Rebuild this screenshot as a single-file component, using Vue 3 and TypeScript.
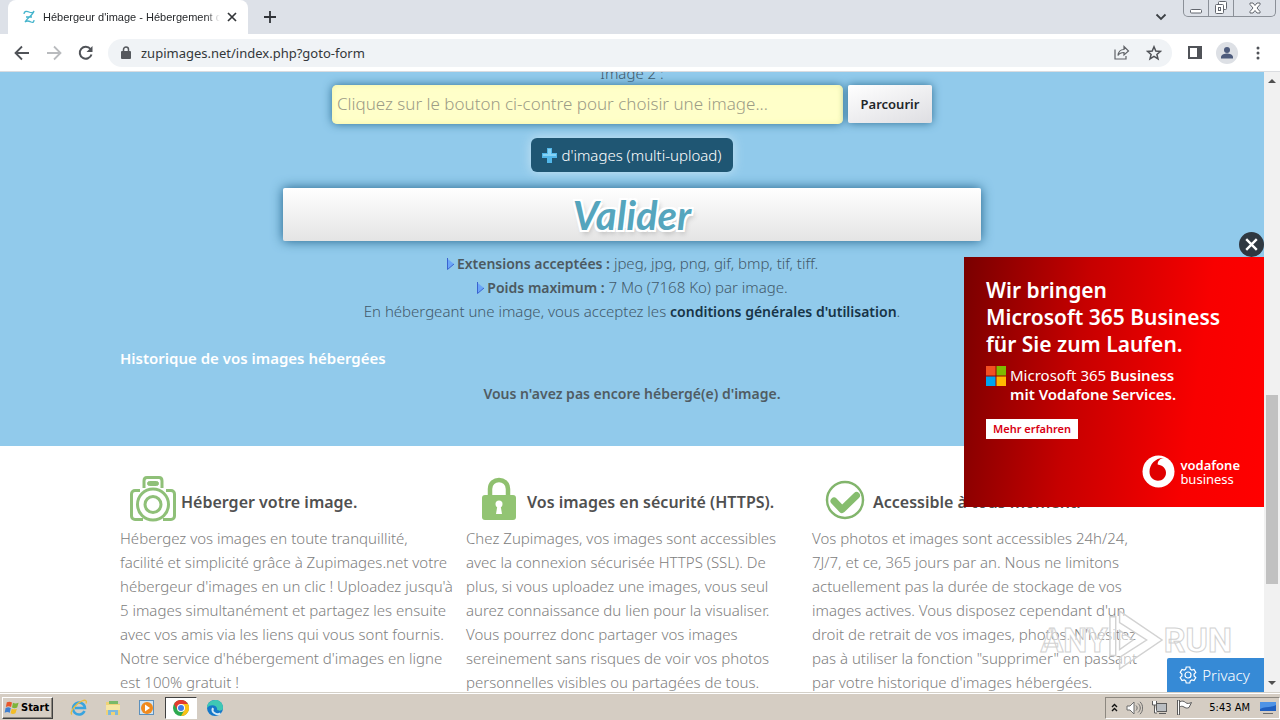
<script setup lang="ts">
import { ref } from 'vue'

interface Feature {
  icon: 'camera' | 'lock' | 'check'
  title: string
  text: string
}

const address = ref('zupimages.net/index.php?goto-form')
const fileName = ref('')
const adOpen = ref(true)

const features: Feature[] = [
  {
    icon: 'camera',
    title: 'Héberger votre image.',
    text: `Hébergez vos images en toute tranquillité,
facilité et simplicité grâce à Zupimages.net votre
hébergeur d'images en un clic ! Uploadez jusqu'à
5 images simultanément et partagez les ensuite
avec vos amis via les liens qui vous sont fournis.
Notre service d'hébergement d'images en ligne
est 100% gratuit !`,
  },
  {
    icon: 'lock',
    title: 'Vos images en sécurité (HTTPS).',
    text: `Chez Zupimages, vos images sont accessibles
avec la connexion sécurisée HTTPS (SSL). De
plus, si vous uploadez une images, vous seul
aurez connaissance du lien pour la visualiser.
Vous pourrez donc partager vos images
sereinement sans risques de voir vos photos
personnelles visibles ou partagées de tous.`,
  },
  {
    icon: 'check',
    title: 'Accessible à tous moment.',
    text: `Vos photos et images sont accessibles 24h/24,
7J/7, et ce, 365 jours par an. Nous ne limitons
actuellement pas la durée de stockage de vos
images actives. Vous disposez cependant d'un
droit de retrait de vos images, photos. N'hésitez
pas à utiliser la fonction "supprimer" en passant
par votre historique d'images hébergées.`,
  },
]
</script>

<template>
  <div class="screen">
    <header class="tabs">
      <div class="tab">
        <svg class="favicon" width="16" height="16" viewBox="0 0 16 16" fill="none" stroke="#45b4cc" stroke-width="1.300">
          <path d="M3 5C3 2 6 2 8 3s4 1 5-1C12 6 6 9 4 13c2-2 4-1 6 0s3 0 3-2M5 8h6" />
        </svg>
        <span class="tab-title">Hébergeur d'image - Hébergement d</span>
        <button class="plain" aria-label="Fermer l'onglet">
          <svg width="12" height="12" viewBox="0 0 12 12" stroke="#333639" stroke-width="1.700"><path d="M2 2l8 8M10 2l-8 8" /></svg>
        </button>
      </div>
      <button class="plain new-tab" aria-label="Nouvel onglet">
        <svg width="14" height="14" viewBox="0 0 14 14" stroke="#303338" stroke-width="1.800"><path d="M7 1v12M1 7h12" /></svg>
      </button>
      <span class="grow"></span>
      <button class="plain chevron" aria-label="Rechercher dans les onglets">
        <svg width="12" height="8" viewBox="0 0 12 8" fill="none" stroke="#3c4045" stroke-width="1.800"><path d="M1.500 1.500L6 6l4.500-4.500" /></svg>
      </button>
      <div class="window-buttons">
        <button class="plain" aria-label="Réduire">
          <svg width="12" height="14" viewBox="0 0 12 14" fill="#fff" stroke="#62666e"><rect x=".5" y="8.500" width="11" height="3.500" rx="1" /></svg>
        </button>
        <button class="plain" aria-label="Restaurer">
          <svg width="14" height="14" viewBox="0 0 14 14" fill="#fff" stroke="#62666e"><rect x="4.500" y=".5" width="8" height="8" rx="1" /><rect x="1.500" y="3.500" width="8" height="9" rx="1" /><rect x="4.500" y="6.500" width="2" height="3" /></svg>
        </button>
        <button class="plain wide" aria-label="Fermer">
          <svg width="12" height="12" viewBox="0 0 12 12" fill="#fff" stroke="#62666e"><path d="M1 1h3l2 2.500L8 1h3v1.500L8 6l3 3.500V11H8L6 8.500 4 11H1V9.500L4 6 1 2.500z" /></svg>
        </button>
      </div>
    </header>

    <nav class="toolbar">
      <button class="plain" aria-label="Retour">
        <svg width="16" height="16" viewBox="0 0 16 16" fill="none" stroke="#505358" stroke-width="1.800"><path d="M15 8H2M8 1.500L1.500 8 8 14.500" /></svg>
      </button>
      <button class="plain" aria-label="Avancer">
        <svg width="16" height="16" viewBox="0 0 16 16" fill="none" stroke="#b9bbbe" stroke-width="1.800"><path d="M1 8h13M8 1.500L14.500 8 8 14.500" /></svg>
      </button>
      <button class="plain" aria-label="Actualiser">
        <svg width="16" height="16" viewBox="0 0 16 16" fill="none" stroke="#505358" stroke-width="2"><path d="M13.500 9.500A6 6 0 1 1 12.500 4" /><path d="M14.500 1v6h-6z" fill="#505358" stroke="none" /></svg>
      </button>
      <div class="omnibox">
        <svg width="10" height="13" viewBox="0 0 10 13"><rect x="0" y="5" width="10" height="8" rx="1" fill="#55585d" /><path d="M2.500 5V3.500a2.500 2.500 0 0 1 5 0V5" fill="none" stroke="#55585d" stroke-width="1.500" /></svg>
        <div class="address">
          <input v-model="address" type="text" aria-label="Adresse" class="url" />
        </div>
        <button class="plain" aria-label="Partager">
          <svg width="16" height="15" viewBox="0 0 16 15" fill="none" stroke="#606368" stroke-width="1.200"><path d="M1 4.500V14h11v-3" /><path d="M4 10.500C4.500 6 7 4.500 10 4.500V1.500l4.500 4.500L10 10V7.500c-3 0-4.500.5-6 3z" /></svg>
        </button>
        <button class="plain" aria-label="Ajouter aux favoris">
          <svg width="16" height="16" viewBox="0 0 16 16" fill="none" stroke="#505358" stroke-width="1.500"><path d="M8 1.800l1.800 4.300 4.600.3-3.500 3 1.100 4.500L8 11.400 4 13.900l1.100-4.500-3.500-3 4.600-.3z" /></svg>
        </button>
      </div>
      <div class="tools">
        <button class="plain" aria-label="Panneau latéral">
          <svg width="14" height="13" viewBox="0 0 14 13"><path d="M0 0h14v13H0zM2 2v9h7V2z" fill="#505358" fill-rule="evenodd" /></svg>
        </button>
        <button class="plain" aria-label="Profil">
          <svg width="22" height="22" viewBox="0 0 22 22"><circle cx="11" cy="11" r="11" fill="#dde0e5" /><circle cx="11" cy="8" r="3" fill="#4d5b7c" /><path d="M5 16.500v-1.500c0-2.500 4-3.500 6-3.500s6 1 6 3.500v1.500z" fill="#4d5b7c" /></svg>
        </button>
        <button class="plain menu" aria-label="Menu">
          <svg width="4" height="14" viewBox="0 0 4 14" fill="#505358"><circle cx="2" cy="2" r="1.500" /><circle cx="2" cy="7" r="1.500" /><circle cx="2" cy="12" r="1.500" /></svg>
        </button>
      </div>
    </nav>

    <div class="viewport">
      <main class="page">
        <section class="upload">
          <form class="form" @submit.prevent>
            <label for="image2">Image 2 :</label>
            <div class="file-row">
              <input id="image2" v-model="fileName" class="file-name" type="text" placeholder="Cliquez sur le bouton ci-contre pour choisir une image..." />
              <button type="button" class="browse">Parcourir</button>
            </div>
            <button type="button" class="multi">
              <svg width="15" height="15" viewBox="0 0 15 15"><path d="M5 0h5v5h5v5h-5v5H5v-5H0V5h5z" fill="#52b7ea" /><path d="M6 1h3v5h5v2H1V6h5z" fill="#86d3f6" /></svg>
              d'images (multi-upload)
            </button>
            <button type="submit" class="submit">Valider</button>
          </form>
          <div class="rules">
            <p>
              <svg width="9" height="12" viewBox="0 0 9 12"><path d="M1 .5L8 6l-7 5.500z" fill="#6ba6f8" /><path d="M1.500 0v11.500L8 6" fill="none" stroke="#3a62d0" /></svg>
              <strong>Extensions acceptées :</strong> jpeg, jpg, png, gif, bmp, tif, tiff.
            </p>
            <p>
              <svg width="9" height="12" viewBox="0 0 9 12"><path d="M1 .5L8 6l-7 5.500z" fill="#6ba6f8" /><path d="M1.500 0v11.500L8 6" fill="none" stroke="#3a62d0" /></svg>
              <strong>Poids maximum :</strong> 7 Mo (7168 Ko) par image.
            </p>
            <p>En hébergeant une image, vous acceptez les <a href="#conditions">conditions générales d'utilisation</a>.</p>
          </div>
          <div class="history">
            <h2>Historique de vos images hébergées</h2>
            <p>Vous n'avez pas encore hébergé(e) d'image.</p>
          </div>
        </section>

        <section class="features">
          <article v-for="f in features" :key="f.icon">
            <div class="feature-head">
              <svg v-if="f.icon === 'camera'" width="46" height="46" viewBox="0 0 46 46" fill="none" stroke="#8fc078" stroke-width="3">
                <path d="M14 12V5c0-2 1-3.500 3-3.500h12c2 0 3 1.500 3 3.500v7" />
                <rect x="17.500" y="5.500" width="11" height="4" rx="2" fill="#8fc078" stroke-width="1" />
                <path d="M10 14.500H5c-2 0-3.500 1.500-3.500 3.500v22c0 2 1.500 3.500 3.500 3.500h8M36 14.500h5c2 0 3.500 1.500 3.500 3.500v22c0 2-1.500 3.500-3.500 3.500h-8" />
                <circle cx="23" cy="28.500" r="15.500" /><circle cx="23" cy="28.500" r="8" />
              </svg>
              <svg v-else-if="f.icon === 'lock'" width="46" height="46" viewBox="0 0 46 46">
                <path d="M14 20V13c0-12 18-12 18 0v7" fill="none" stroke="#8fc06f" stroke-width="4.500" />
                <rect x="6" y="19" width="34" height="25" rx="3" fill="#92c473" />
                <circle cx="23" cy="28" r="3.500" fill="#fff" /><path d="M21.500 29h3l1.500 9h-6z" fill="#fff" />
              </svg>
              <svg v-else width="46" height="46" viewBox="0 0 46 46">
                <circle cx="23" cy="24" r="18" fill="none" stroke="#82b56c" stroke-width="2.500" />
                <path d="M12 25l8 8.500 14.500-14" fill="none" stroke="#86bd6e" stroke-width="7" stroke-linecap="round" stroke-linejoin="round" />
              </svg>
              <h3>{{ f.title }}</h3>
            </div>
            <p>{{ f.text }}</p>
          </article>
        </section>
      </main>

      <div class="scrollbar" aria-hidden="true">
        <svg width="8" height="4" viewBox="0 0 8 4"><path d="M0 4l4-4 4 4z" fill="#505050" /></svg>
        <span class="track"><i></i></span>
        <svg width="8" height="4" viewBox="0 0 8 4"><path d="M0 0h8L4 4z" fill="#505050" /></svg>
      </div>

      <aside v-if="adOpen" class="ad">
        <button class="plain ad-close" aria-label="Schließen" @click="adOpen = false">
          <svg width="25" height="25" viewBox="0 0 26 26"><circle cx="13" cy="13" r="13" fill="#2f3841" /><path d="M7.500 7.500l11 11M18.500 7.500l-11 11" stroke="#fff" stroke-width="2.500" /></svg>
        </button>
        <div class="ad-body">
          <p class="ad-title">Wir bringen<br />Microsoft 365 Business<br />für Sie zum Laufen.</p>
          <div class="ad-product">
            <svg width="20" height="20" viewBox="0 0 20 20"><path d="M0 0h9.500v9.500H0z" fill="#f25022" /><path d="M10.500 0H20v9.500h-9.500z" fill="#7fba00" /><path d="M0 10.500h9.500V20H0z" fill="#00a4ef" /><path d="M10.500 10.500H20V20h-9.500z" fill="#ffb900" /></svg>
            <p><span>Microsoft 365</span> Business<br />mit Vodafone Services.</p>
          </div>
          <a class="ad-cta" href="#vodafone">Mehr erfahren</a>
          <div class="ad-brand">
            <svg width="33" height="33" viewBox="0 0 33 33"><circle cx="16.500" cy="16.500" r="16" fill="#fff" /><path d="M22 3c-4 .5-6.500 3-6.300 6.500 5 .8 8.300 3.800 8.300 8.200 0 4.500-3.500 8-8 8s-8.500-3.500-8.500-9C7.500 9 14 2.500 22 3z" fill="#e00000" /></svg>
            <p><strong>vodafone</strong><br />business</p>
          </div>
        </div>
      </aside>

      <div class="watermark" aria-hidden="true">
        <span>ANY</span>
        <svg width="56" height="64" viewBox="0 0 58 64" fill="#fff" fill-opacity=".5" stroke="#d2d2d2" stroke-width="1.500"><path d="M2 8h6v40H2zM12 2l44 30-44 30V50l28-18-28-18z" /><path d="M12 22l14 10-14 10z" /></svg>
        <span>RUN</span>
      </div>

      <button class="privacy">
        <svg width="18" height="18" viewBox="0 0 18 18" fill="none" stroke="#fff" stroke-width="1.200"><path d="M7.200 1h3.600l.5 2.200 1.500.9 2.200-.7 1.800 3.100-1.700 1.600v1.800l1.700 1.600-1.800 3.100-2.200-.7-1.500.9-.5 2.200H7.200l-.5-2.200-1.500-.9-2.200.7-1.800-3.100 1.700-1.600V8.100L1.200 6.500 3 3.400l2.200.7 1.500-.9z" /><circle cx="9" cy="9" r="3" /></svg>
        Privacy
      </button>
    </div>

    <footer class="taskbar">
      <button class="start">
        <svg width="16" height="16" viewBox="0 0 17 16"><path d="M3 2c2-1 3.500-1 5.500.2L7.500 7C5.500 6 4 6 2 7z" fill="#e8562a" /><path d="M9.500 2.500c2 1 3.500 1 6 0L14 7.500c-2 1-3.500 1-5.500 0z" fill="#7db43a" /><path d="M1.700 8c2-1 3.500-1 5.500 0l-1 5c-2-1-3.500-1-5.500 0z" fill="#3f7fd0" /><path d="M8.200 8.700c2 1 3.500 1 5.500 0l-1.500 5c-2 1-3.500 1-5.200 0z" fill="#f3bd27" /></svg>
        Start
      </button>
      <button class="plain task" aria-label="Internet Explorer">
        <svg width="18" height="18" viewBox="0 0 18 18" fill="none"><path d="M14.500 12a6 6 0 1 1 .5-3H5" stroke="#39a4df" stroke-width="2.500" /><path d="M2 15.500C-1 14 5 5 12 2c4-1.800 5 0 4 2.500" stroke="#e9bc3f" stroke-width="1.300" /></svg>
      </button>
      <button class="plain task" aria-label="Explorateur">
        <svg width="18" height="18" viewBox="0 0 18 18"><path d="M2 3h6l1 2h7v11H2z" fill="#efd277" /><path d="M5 2h9v3H5z" fill="#79b968" /><path d="M2 6h14v5H2z" fill="#f7e6a3" /><path d="M4 16v-5h10v5h-3v-3H7v3z" fill="#7eb9dc" /></svg>
      </button>
      <button class="plain task" aria-label="Lecteur multimédia">
        <svg width="18" height="18" viewBox="0 0 18 18"><rect x="1.500" y="1.500" width="14" height="14" fill="#cfe4f4" stroke="#5c90bc" /><circle cx="9" cy="9" r="6" fill="#f08a1d" /><path d="M7 5.500l5 3.500-5 3.500z" fill="#fff" /></svg>
      </button>
      <button class="plain task active" aria-label="Chrome">
        <svg width="16" height="16" viewBox="0 0 16 16"><circle cx="8" cy="8" r="8" fill="#2da94f" /><path d="M1 4a8 8 0 0 1 14 0H8L4.500 10z" fill="#e33b2e" /><path d="M8 4h7a8 8 0 0 1-7 12l3.500-6z" fill="#fbc116" /><circle cx="8" cy="8" r="4" fill="#fff" /><circle cx="8" cy="8" r="3" fill="#3f7de8" /></svg>
      </button>
      <button class="plain task" aria-label="Edge">
        <svg width="18" height="18" viewBox="0 0 18 18"><circle cx="9" cy="9" r="8" fill="#1577c9" /><path d="M1 9c0-10 16-11 16 0 0 3-5 3.500-6 1.500C12 7 5 4 1 9z" fill="#3fc8b4" /><path d="M7 9c-2 4 3 7.500 7.500 5.500" fill="none" stroke="#d4e8f4" stroke-width="2" /></svg>
      </button>
      <span class="grow"></span>
      <div class="tray">
        <svg width="7" height="9" viewBox="0 0 7 9" fill="none" stroke="#111" stroke-width="1.400"><path d="M1 4l2.500-2.500L6 4M1 8l2.500-2.500L6 8" /></svg>
        <svg width="17" height="14" viewBox="0 0 17 14" fill="#fff" stroke="#6b6b6b"><path d="M1 5h3l4-4v12L4 9H1z" /><path d="M10 4.500c1.500 1.500 1.500 3.500 0 5M12 2.500c3 2.500 3 6.500 0 9M14 .8c3.500 3.500 3.500 9 0 12.400" fill="none" /></svg>
        <svg width="17" height="15" viewBox="0 0 17 15" fill="#fff" stroke="#5b5b5b"><rect x="5.500" y="3.500" width="10" height="8" fill="#b9bdc1" /><path d="M8 13.500h7M1.500 1v4h4V1M3.500 5v8H6" /></svg>
        <svg width="17" height="15" viewBox="0 0 17 15" fill="#fff" stroke="#5b5b5b"><path d="M3.500 2C6 .5 8 1 9.500 2.500s4 1 6 0L13 7.500c-2 1-3.500.5-5-.5s-3-1-4.500 0z" /><path d="M1.500 0v15h2V0z" /></svg>
        <time>5:43 AM</time>
        <svg width="16" height="14" viewBox="0 0 16 14"><path d="M0 1h16v9H0z" fill="#1f5fc0" /><path d="M0 1h16v3C10 7 5 5 0 8z" fill="#4e93e6" /><path d="M3 12h10v1H3z" fill="#6b6b6b" /></svg>
      </div>
    </footer>
  </div>
</template>

<style>
body {
  margin: 0;
}
</style>

<style scoped>
* {
  box-sizing: border-box;
}
p,
h2,
h3 {
  margin: 0;
}
svg {
  display: block;
  flex: none;
}
.screen {
  display: flex;
  flex-direction: column;
  height: 100vh;
  overflow: hidden;
  background: #fff;
  font-family: 'Noto Sans', 'Open Sans', sans-serif;
}
.plain {
  display: flex;
  align-items: center;
  justify-content: center;
  padding: 0;
  border: 0;
  background: none;
}
.grow {
  flex: 1;
}

.tabs {
  display: flex;
  align-items: center;
  height: 34px;
  background: #dde1e8;
}
.tab {
  display: flex;
  align-items: center;
  align-self: stretch;
  gap: 6px;
  width: 240px;
  margin-left: 8px;
  padding: 0 10px 0 13px;
  border-radius: 8px 8px 0 0;
  background: #fff;
}
.tab-title {
  flex: 1;
  min-width: 0;
  overflow: hidden;
  color: #26282b;
  font: 11px/16px 'Liberation Sans', sans-serif;
  white-space: nowrap;
  mask-image: linear-gradient(90deg, #000 92%, transparent);
}
.new-tab {
  margin-left: 15px;
}
.chevron {
  margin-right: 16px;
}
.window-buttons {
  display: flex;
  align-self: flex-start;
  height: 17px;
  margin-right: 4px;
  border: 1px solid #8b9098;
  border-top: 0;
  border-radius: 0 0 5px 5px;
}
.window-buttons button {
  width: 25px;
  border-right: 1px solid #8b9098;
}
.window-buttons .wide {
  width: 41px;
  border-right: 0;
}

.toolbar {
  display: flex;
  align-items: center;
  gap: 16px;
  height: 38px;
  padding: 0 20px 0 14px;
  border-bottom: 1px solid #dadce0;
  background: #fff;
}
.omnibox {
  display: flex;
  flex: 1;
  align-items: center;
  gap: 16px;
  height: 28px;
  margin-left: -2px;
  padding: 0 10px 0 13px;
  border-radius: 14px;
  background: #f0f3f6;
}
.address {
  flex: 1;
  margin-left: -6px;
}
.url {
  display: block;
  width: 100%;
  padding: 0;
  border: 0;
  outline: 0;
  background: none;
  color: #33373a;
  font: 13px/20px 'Noto Sans', sans-serif;
}
.tools {
  display: flex;
  align-items: center;
  gap: 14px;
}
.menu {
  margin-left: 4px;
}

.viewport {
  position: relative;
  display: flex;
  flex: 1;
  min-height: 0;
  overflow: hidden;
}
.page {
  flex: 1;
  min-width: 0;
  overflow: hidden;
}
.upload {
  margin-top: -10px;
  padding: 0 120px 40px;
  background: #91caeb;
  color: #42596a;
  font-size: 14px;
  line-height: 24px;
  text-align: center;
}
.form {
  display: flex;
  flex-direction: column;
  align-items: center;
}
.form label {
  font-size: 15px;
  font-weight: 300;
  line-height: 23px;
}
.file-row {
  display: flex;
  gap: 5px;
}
.file-name {
  width: 511px;
  height: 39px;
  padding: 0 5px 2px;
  border: 0;
  border-radius: 5px;
  background: #ffffc9;
  box-shadow: 0 0 10px #2f6f94, inset 0 0 6px #f4f4a8;
  font: 300 17px/22px 'Noto Sans', sans-serif;
}
.file-name::placeholder {
  color: #9c9c86;
  opacity: 1;
}
.browse {
  width: 84px;
  height: 38px;
  padding: 0;
  border: 0;
  border-radius: 2px;
  background: linear-gradient(160deg, #fff, #dedee2);
  box-shadow: 0 0 10px #2f6f94;
  color: #22262a;
  font: 600 13px/20px 'Noto Sans', sans-serif;
}
.multi {
  display: flex;
  align-items: center;
  justify-content: center;
  gap: 4px;
  width: 202px;
  height: 34px;
  margin-top: 14px;
  padding: 0;
  border: 0;
  border-radius: 6px;
  background: #1f5673;
  box-shadow: 0 0 12px #c9e4f3;
  color: #fff;
  font: 300 15px/20px 'Noto Sans', sans-serif;
}
.submit {
  width: 698px;
  height: 53px;
  margin-top: 16px;
  padding: 0;
  border: 0;
  border-radius: 2px;
  background: linear-gradient(#fff, #e4e4e4);
  box-shadow: 0 0 12px #1f6088;
  color: #55a5bd;
  font: italic 700 40px/50px Lato, sans-serif;
  text-shadow: 2px 2px #fff, -2px -2px #fff, 2px -2px #fff, -2px 2px #fff, 2px 4px 5px #b9b9b9;
}
.rules {
  margin-top: 10px;
  font-size: 15px;
  font-weight: 300;
}
.rules svg {
  display: inline-block;
  margin-right: 2px;
  vertical-align: -1px;
}
.rules strong,
.rules a {
  font-size: 14px;
  font-weight: 600;
  line-height: 16px;
}
.rules strong {
  color: #4c5960;
}
.rules a {
  color: #173447;
  text-decoration: none;
}
.history {
  margin-top: 23px;
}
.history h2 {
  color: #fff;
  font-size: 15px;
  font-weight: 600;
  line-height: 24px;
  text-align: left;
}
.history p {
  margin-top: 12px;
  color: #505c63;
  font-weight: 600;
}

.features {
  display: grid;
  grid-template-columns: repeat(3, 1fr);
  gap: 14px;
  padding: 28px 120px 0;
}
.features article {
  min-width: 0;
  color: #808080;
  font-size: 15px;
  font-weight: 300;
  line-height: 24px;
  white-space: pre;
}
.feature-head {
  display: flex;
  align-items: center;
  gap: 5px;
  height: 52px;
  padding: 0 0 3px 10px;
}
.feature-head h3 {
  padding-top: 7px;
  color: #505050;
  font-size: 16px;
  font-weight: 600;
}

.scrollbar {
  display: flex;
  flex-direction: column;
  align-items: center;
  width: 16px;
  padding: 7px 0;
  background: #f1f1f1;
}
.track {
  display: flex;
  flex: 1;
  flex-direction: column;
  padding: 312px 0 97px;
}
.track i {
  flex: 1;
  width: 12px;
  background: #c1c1c1;
}

.ad {
  position: absolute;
  top: 160px;
  right: 16px;
  width: 300px;
  color: #fff;
}
.ad-close {
  margin-left: auto;
}
.ad-body {
  display: flex;
  flex-direction: column;
  align-items: flex-start;
  height: 250px;
  padding: 20px 24px 19px 22px;
  background: linear-gradient(98deg, #790000, #c60000 38%, #f80000 75%, #ff0000);
}
.ad-title {
  font-size: 21px;
  font-weight: 600;
  line-height: 27px;
  white-space: nowrap;
}
.ad-product {
  display: flex;
  gap: 4px;
  margin-top: 8px;
  font-size: 15px;
  font-weight: 600;
  line-height: 19px;
  white-space: nowrap;
}
.ad-product span {
  font-weight: 400;
}
.ad-cta {
  margin-top: 15px;
  padding: 0 7px;
  background: #fff;
  color: #d80012;
  font-size: 11px;
  font-weight: 600;
  line-height: 20px;
  text-decoration: none;
}
.ad-brand {
  display: flex;
  align-items: center;
  gap: 5px;
  margin-top: auto;
  margin-left: auto;
  font-size: 13px;
  line-height: 14px;
}
.ad-brand strong {
  font-weight: 600;
}

.watermark {
  position: absolute;
  right: 48px;
  bottom: 20px;
  display: flex;
  align-items: center;
  color: rgba(255, 255, 255, 0.5);
  font: 700 34px/44px Roboto, sans-serif;
  pointer-events: none;
  -webkit-text-stroke: 1px #d2d2d2;
}
.privacy {
  position: absolute;
  right: 16px;
  bottom: 0;
  display: flex;
  align-items: center;
  justify-content: center;
  gap: 5px;
  width: 97px;
  height: 34px;
  padding: 0 2px 0 0;
  border: 0;
  border-radius: 2px 0 0 0;
  background: #368ad6;
  color: #fff;
  font: 300 15px/20px 'Noto Sans', sans-serif;
}

.taskbar {
  display: flex;
  align-items: center;
  height: 28px;
  padding: 2px 0 0 2px;
  border-top: 1px solid #d4d0c8;
  background: #d5cdc3;
  box-shadow: inset 0 1px #fff;
}
.start {
  display: flex;
  align-items: center;
  gap: 1px;
  height: 22px;
  margin-right: 10px;
  padding: 0 3px 0 1px;
  border: 1px solid;
  border-color: #fff #404040 #404040 #fff;
  background: #d5cdc3;
  box-shadow: inset -1px -1px #8d8880;
  font: 700 11px/16px 'DejaVu Sans Condensed', sans-serif;
}
.task {
  width: 32px;
  height: 22px;
  margin-right: 2px;
}
.task.active {
  border: 1px solid;
  border-color: #404040 #fff #fff #404040;
  background: #fff;
}
.tray {
  display: flex;
  align-items: center;
  gap: 8px;
  height: 22px;
  padding: 0 3px 0 5px;
  border: 1px solid;
  border-color: #8d8880 #fff #fff #8d8880;
}
.tray time {
  margin: 0 2px 0 8px;
  color: #000;
  font: 11px/16px 'DejaVu Sans Condensed', sans-serif;
}
</style>
